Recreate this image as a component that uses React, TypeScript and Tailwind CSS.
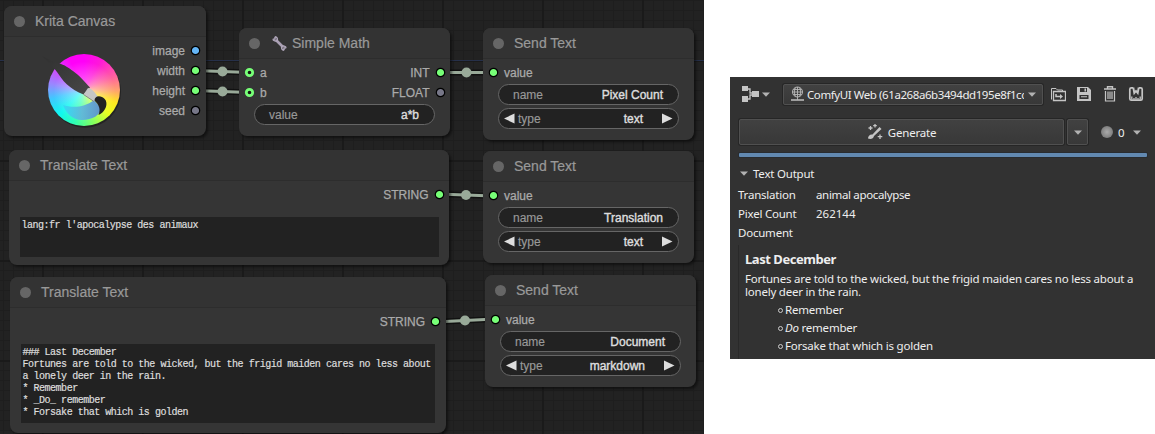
import type { ReactNode } from "react";

const GREEN = "#77ff77";
const GRAY = "#777788";
const BLUE = "#64b5f6";

function Dot({ color, ring = false }: { color: string; ring?: boolean }) {
  return (
    <svg className="block size-[11px] shrink-0" viewBox="0 0 11 11">
      {ring ? (
        <circle cx="5.5" cy="5.5" r="3.2" fill="#151515" stroke={color} strokeWidth="2.8" />
      ) : (
        <circle cx="5.5" cy="5.5" r="4.2" fill={color} stroke="#000" strokeWidth="1.2" />
      )}
    </svg>
  );
}

function Node({ place, title, icon, children }: { place: string; title: string; icon?: ReactNode; children: ReactNode }) {
  return (
    <section className={`absolute flex flex-col rounded-[8px] bg-[#353535] shadow-[2px_2px_3px_rgba(0,0,0,0.5)] ${place}`}>
      <header className="flex h-[31px] shrink-0 items-center rounded-t-[8px] border-b border-[#2d2d2d] bg-[#333333] pl-[10px] text-[14px] text-[#999999]">
        <span className="mr-[10px] size-[11px] rounded-full bg-[#666666]" />
        {icon}
        <h2 className="whitespace-nowrap leading-none [-webkit-text-stroke:0.2px_#999999]">{title}</h2>
      </header>
      {children}
    </section>
  );
}

function SlotLabel({ children }: { children: ReactNode }) {
  return <span className="pt-[1px] [-webkit-text-stroke:0.25px_#aaaaaa]">{children}</span>;
}

function Output({ label, color }: { label: string; color: string }) {
  return (
    <div className="flex h-5 items-center justify-end gap-[5px] pr-[4.5px]">
      <SlotLabel>{label}</SlotLabel>
      <Dot color={color} />
    </div>
  );
}

function Input({ label, ring = false }: { label: string; ring?: boolean }) {
  return (
    <div className="flex h-5 items-center gap-[5px] pl-[5px]">
      <Dot color={GREEN} ring={ring} />
      <SlotLabel>{label}</SlotLabel>
    </div>
  );
}

function Field({ name, value, choice = false }: { name: string; value: string; choice?: boolean }) {
  return (
    <div className="mx-[15px] flex h-[21px] items-center rounded-full border border-[#666666] bg-[#222222] text-[#999999]">
      {choice && (
        <svg className="ml-[5px] mr-[3px] h-[11px] w-[11px]" viewBox="0 0 11 11">
          <path d="M0 5.5 10.5 0.5V10.5Z" fill="#dddddd" />
        </svg>
      )}
      <span className={`[-webkit-text-stroke:0.15px_#999999] ${choice ? "" : "ml-[14px]"}`}>{name}</span>
      <span className={`ml-auto text-[#dddddd] [-webkit-text-stroke:0.4px_#dddddd] ${choice ? "mr-[19px]" : "mr-[15px]"}`}>{value}</span>
      {choice && (
        <svg className="mr-[5px] h-[11px] w-[11px]" viewBox="0 0 11 11">
          <path d="M10.5 5.5 0 0.5V10.5Z" fill="#dddddd" />
        </svg>
      )}
    </div>
  );
}

function SendText({ place, name, type }: { place: string; name: string; type: string }) {
  return (
    <Node place={`h-[112px] w-[211px] ${place}`} title="Send Text">
      <div className="mt-[3px]">
        <Input label="value" />
      </div>
      <div className="mt-[2px] flex flex-col gap-[3px]">
        <Field name="name" value={name} />
        <Field name="type" value={type} choice />
      </div>
    </Node>
  );
}

function TranslateText({ place, area, text }: { place: string; area: string; text: string }) {
  return (
    <Node place={place} title="Translate Text">
      <div className="mt-[3px]">
        <Output label="STRING" color={GREEN} />
      </div>
      <pre className={`ml-[11px] mt-[13px] bg-[#222222] pl-[1.5px] pt-[3px] font-['Liberation_Mono',monospace] text-[10px] leading-[12px] tracking-[-0.485px] text-[#dddddd] [-webkit-text-stroke:0.2px_#dddddd] ${area}`}>{text}</pre>
    </Node>
  );
}

function KritaLogo() {
  return (
    <svg className="block h-[84px] w-[84px]" viewBox="42 50 84 84">
      <defs>
        <radialGradient id="glow">
          <stop offset="0" stopColor="#fff" stopOpacity="0.5" />
          <stop offset="0.5" stopColor="#fff" stopOpacity="0.25" />
          <stop offset="1" stopColor="#fff" stopOpacity="0" />
        </radialGradient>
        <linearGradient id="swoosh" x1="0" x2="1">
          <stop offset="0" stopColor="#35d8f6" />
          <stop offset="0.5" stopColor="#61b3dc" />
          <stop offset="1" stopColor="#5288d8" />
        </linearGradient>
        <linearGradient id="handle" x1="0" y1="0" x2="1" y2="1">
          <stop offset="0" stopColor="#303030" />
          <stop offset="1" stopColor="#484848" />
        </linearGradient>
      </defs>
      <circle cx="85" cy="91.7" r="36" fill="#171717" opacity="0.6" />
      <foreignObject x="48" y="54" width="73" height="73">
        <div className="size-[72px] rounded-full bg-[conic-gradient(#ff00f8_0deg,#ff18d8_30deg,#ff60a0_65deg,#ffa070_90deg,#ffe820_112deg,#e8ff20_135deg,#80ff60_165deg,#30ffb0_195deg,#10f8f0_225deg,#40c8ff_255deg,#9888ff_280deg,#d840ff_310deg,#ff00f8_335deg)]" />
      </foreignObject>
      <circle cx="84.5" cy="92.5" r="31" fill="url(#glow)" />
      <path d="M63 105C72 108 84 108 94 100L101 108C101 115 92 120 82 120 72 120 66 113 63 105Z" fill="url(#swoosh)" opacity="0.9" />
      <path d="M42 56C47 59 53 61 58 63 65 65 69 68 73 71 79 75 85 82 90 87.500L83.500 94.500C77 92 72 89 67 84.500 62 80 60 76 57 72 53 66 47 61 42 56Z" fill="url(#handle)" />
      <path d="M88 88C91 88 95 92 98 97L94 101.500 83.500 94.500Z" fill="#c5c5c5" />
      <path d="M83.500 94.500 94 101.500" stroke="#777" strokeWidth="0.8" />
      <path d="M94.500 100.500C94.500 97 98 95 102 97 107 99 107.500 105 105 109 103.500 112 101 114 98.500 115 101 109 99 105 94.500 100.500Z" fill="#222" />
    </svg>
  );
}

function Links() {
  const links = [
    [195, 70.5, 249, 72.5, 222.5, 71.5],
    [195, 90.5, 249, 92.5, 222.5, 91.5],
    [440, 72.5, 493, 72.5, 466.5, 72.5],
    [438, 194, 493, 196, 466, 195],
    [435, 322, 495, 319, 465, 320.5],
  ];
  return (
    <svg className="absolute left-0 top-0 h-[434px] w-[704px]" viewBox="0 0 704 434">
      <path d="M0 60.5H704" stroke="#26304a" />
      {links.map(([x1, y1, x2, y2, cx, cy]) => (
        <g key={`${x1}-${y1}`}>
          <path d={`M${x1} ${y1}L${x2} ${y2}`} stroke="#000" strokeOpacity="0.5" strokeWidth="6" />
          <path d={`M${x1} ${y1}L${x2} ${y2}`} stroke="#99aa99" strokeWidth="3" />
          <circle cx={cx} cy={cy} r="5" fill="#99aa99" />
        </g>
      ))}
    </svg>
  );
}

function Caret() {
  return (
    <svg className="block h-[5px] w-[8px] shrink-0" viewBox="0 0 8 5">
      <path d="M0 0.500H8L4 4.800Z" fill="#b2b2b2" />
    </svg>
  );
}

function Icon({ children }: { children: ReactNode }) {
  return (
    <svg className="block size-4 shrink-0" viewBox="0 0 16 16" fill="none" stroke="#c5c5c5">
      {children}
    </svg>
  );
}

const DOCUMENT = `### Last December
Fortunes are told to the wicked, but the frigid maiden cares no less about
a lonely deer in the rain.
* Remember
* _Do_ remember
* Forsake that which is golden`;

function GraphCanvas() {
  return (
    <main className="relative h-[434px] w-[704px] shrink-0 overflow-hidden bg-[#222222] bg-[linear-gradient(90deg,#1a1a1a_2px,transparent_2px),linear-gradient(#1a1a1a_2px,transparent_2px),linear-gradient(90deg,#1e1e1e_1px,transparent_1px),linear-gradient(#1e1e1e_1px,transparent_1px)] bg-[length:100px_100px,100px_100px,10px_10px,10px_10px] bg-[position:42px_0px,0px_60px,3px_0px,0px_0px] font-['Liberation_Sans',Arial,sans-serif] text-[12px] leading-none text-[#aaaaaa]">
      <Links />
      <Node place="left-[4px] top-[6px] h-[130px] w-[201.5px]" title="Krita Canvas">
        <div className="flex pl-[38px] pt-[3px]">
          <div className="mt-[10px] h-[84px] w-[84px]">
            <KritaLogo />
          </div>
          <div className="flex flex-1 flex-col">
            <Output label="image" color={BLUE} />
            <Output label="width" color={GREEN} />
            <Output label="height" color={GREEN} />
            <Output label="seed" color={GRAY} />
          </div>
        </div>
      </Node>
      <Node
        place="left-[239px] top-[28px] h-[108px] w-[211px]"
        title="Simple Math"
        icon={
          <svg className="ml-[2px] mr-[5px] size-[15px] shrink-0" viewBox="0 0 15 15">
            <path d="M4 4 11 11" stroke="#aaa0b4" strokeWidth="2.600" />
            <path d="M3 0.800V3L0.800 3.200M0.800 3.200C1.500 5 4 5.500 5 4.500 6 3 5 1 3 0.800M12 14.200V12L14.200 11.800M14.200 11.800C13.500 10 11 9.500 10 10.500 9 12 10 14 12 14.200" fill="none" stroke="#b0a6ba" strokeWidth="1.500" />
          </svg>
        }
      >
        <div className="mt-[3px] flex justify-between">
          <div>
            <Input label="a" ring />
            <Input label="b" ring />
          </div>
          <div>
            <Output label="INT" color={GREEN} />
            <Output label="FLOAT" color={GRAY} />
          </div>
        </div>
        <div className="mt-[2px]">
          <Field name="value" value="a*b" />
        </div>
      </Node>
      <SendText place="left-[483px] top-[28px]" name="Pixel Count" type="text" />
      <TranslateText place="left-[9px] top-[150px] h-[115px] w-[440px]" area="mr-[10px] h-[40px]" text="lang:fr l'apocalypse des animaux" />
      <SendText place="left-[483px] top-[151px]" name="Translation" type="text" />
      <TranslateText place="left-[10px] top-[277px] h-[156px] w-[435.500px]" area="mr-[10.500px] h-[79px]" text={DOCUMENT} />
      <SendText place="left-[485px] top-[275px]" name="Document" type="markdown" />
    </main>
  );
}

const BUTTON = "flex items-center rounded-[2px] border border-[#505050] bg-linear-to-b from-[#414141] to-[#383838] shadow-[0_0_0_1px_#262626]";

function GeneratePanel() {
  return (
    <aside className="ml-[26px] mt-[77px] flex h-[282px] w-[425px] shrink-0 flex-col overflow-hidden bg-[#323232] font-['Noto_Sans','Open_Sans',sans-serif] text-[11.5px] leading-none tracking-[-0.215px] text-[#eeeeee]">
      <div className="mt-[6px] flex h-[22px] items-center pl-[12px]">
        <svg className="block h-4 w-[17px]" viewBox="0 0 17 16">
          <path d="M0 0H6V5H0ZM0 10H6V16H0ZM10 5H17V11H10Z" fill="#c5c5c5" />
          <path d="M6 3H8V7H11M6 13H8V9H11" fill="none" stroke="#c5c5c5" strokeWidth="1.300" />
        </svg>
        <span className="ml-[3px]"><Caret /></span>
        <div className={`ml-[13px] h-[21px] w-[260px] pl-[6px] pr-[6px] ${BUTTON}`}>
          <svg className="block size-4 shrink-0" viewBox="0 0 16 16" fill="none" stroke="#b8b8b8">
            <circle cx="7.500" cy="6" r="5" />
            <path d="M2.500 6H12.500M3.500 3.500H11.500M3.500 8.500H11.500M7.500 1V14M5.500 1.500C4 4.500 4 7.500 5.500 10.500M9.500 1.500C11 4.500 11 7.500 9.500 10.500" strokeWidth="0.900" />
            <path d="M1 14H14" strokeWidth="1.600" />
          </svg>
          <span className="ml-[1px] w-[217px] overflow-hidden whitespace-nowrap pb-[3px] pt-[4px] tracking-[-0.420px]">ComfyUI Web (61a268a6b3494dd195e8f1cc</span>
          <span className="ml-auto"><Caret /></span>
        </div>
        <div className="ml-[7px] flex gap-[10px]">
          <Icon>
            <path d="M1.500 13.500V2.500H6L7.500 4H12.500V6" />
            <path d="M3.500 5.500H15.500V14.500H3.500Z" strokeWidth="1.300" />
            <path d="M6 8V10.500H11" strokeWidth="1.500" />
            <path d="M10 8 13 10.500 10 13Z" fill="#c5c5c5" stroke="none" />
          </Icon>
          <Icon>
            <path d="M1 1H12L15 4V15H1Z" fill="#c5c5c5" stroke="none" />
            <path d="M4 2H11V6H4ZM3.500 9H12.500V13H3.500Z" fill="#333" stroke="none" />
            <path d="M8.500 2.500H10V5.500H8.500ZM5 10.300H11V11.300H5Z" fill="#c5c5c5" stroke="none" />
          </Icon>
          <Icon>
            <path d="M2 3H14M5.500 2.500V.700H10.500V2.500" strokeWidth="1.400" />
            <path d="M3.500 5V15H12.500V5M6 5.500V13M8 5.500V13M10 5.500V13" strokeWidth="1.200" />
          </Icon>
          <Icon>
            <path d="M5 1.800H3.300Q1.800 1.800 1.800 3.300V12.700Q1.800 14.200 3.300 14.200H12.700Q14.200 14.200 14.200 12.700V3.300Q14.200 1.800 12.700 1.800H11" strokeWidth="1.700" />
            <path d="M5.300 1.500 6.300 7 8 5 9.700 7 10.700 1.500" strokeWidth="1.900" />
            <path d="M3.800 13.500V10.500M6 13.500V12M8 13.500V11M10 13.500V12M12.200 13.500V10.500" strokeWidth="1.300" />
          </Icon>
        </div>
      </div>
      <div className="mt-[14px] flex h-[26px] items-stretch pl-[9px]">
        <div className={`w-[325px] justify-center gap-[5px] ${BUTTON}`}>
          <Icon>
            <path d="M1 14.500C1 12 3 10 5.500 10.500L12.500 3 14.500 5 7 12C6.500 14.500 4 15.500 1 14.500Z" fill="#c5c5c5" stroke="none" />
            <path d="M3.500 2V6M1.500 4H5.500M8 0V3.500M6.200 1.700H9.800M13 10.500V15M10.700 12.700H15.300" strokeWidth="1.300" />
          </Icon>
          <span className="pt-[1px]">Generate</span>
        </div>
        <div className={`ml-[3px] w-[21px] justify-center ${BUTTON}`}><Caret /></div>
        <div className="ml-[13px] flex items-center">
          <span className="size-[12px] rounded-full bg-[radial-gradient(#aaaaaa,#858585_60%,#666666)]" />
          <span className="ml-[5px] pt-[1px]">0</span>
          <span className="ml-[9px]"><Caret /></span>
        </div>
      </div>
      <div className="ml-[9px] mt-[8px] h-[4px] w-[408px] shrink-0 rounded-[1px] bg-[#6289b1] shadow-[0_0_0_1px_#292c30]" />
      <div className="mt-[10px] flex h-[13px] items-center gap-[5px] pl-[10px]">
        <Caret />
        <h2>Text Output</h2>
      </div>
      <dl className="mt-[5px] grid shrink-0 grid-cols-[78px_1fr] auto-rows-[19px] items-center pl-[8px]">
        <dt>Translation</dt>
        <dd className="tracking-[-0.34px]">animal apocalypse</dd>
        <dt>Pixel Count</dt>
        <dd className="tracking-normal">262144</dd>
        <dt>Document</dt>
      </dl>
      <article className="ml-[8px] mt-[3px] flex-1 border-l border-[#292929] pl-[6px]">
        <h3 className="pt-[8px] text-[13px] font-bold tracking-[-0.45px]">Last December</h3>
        <p className="mt-[6px] whitespace-nowrap leading-[13px]">
          Fortunes are told to the wicked, but the frigid maiden cares no less about a
          <br />
          lonely deer in the rain.
        </p>
        <ul className="mt-[3px] leading-[18px]">
          {["Remember", "Do remember", "Forsake that which is golden"].map((item) => (
            <li key={item} className="flex items-center gap-[2px] pl-[33px]">
              <span className="size-[5px] rounded-full border border-[#cccccc]" />
              <span>{item.startsWith("Do ") ? <><em>Do</em>{item.slice(2)}</> : item}</span>
            </li>
          ))}
        </ul>
      </article>
    </aside>
  );
}

export default function App() {
  return (
    <div className="flex h-[434px] w-[1155px] overflow-hidden bg-white">
      <GraphCanvas />
      <GeneratePanel />
    </div>
  );
}
